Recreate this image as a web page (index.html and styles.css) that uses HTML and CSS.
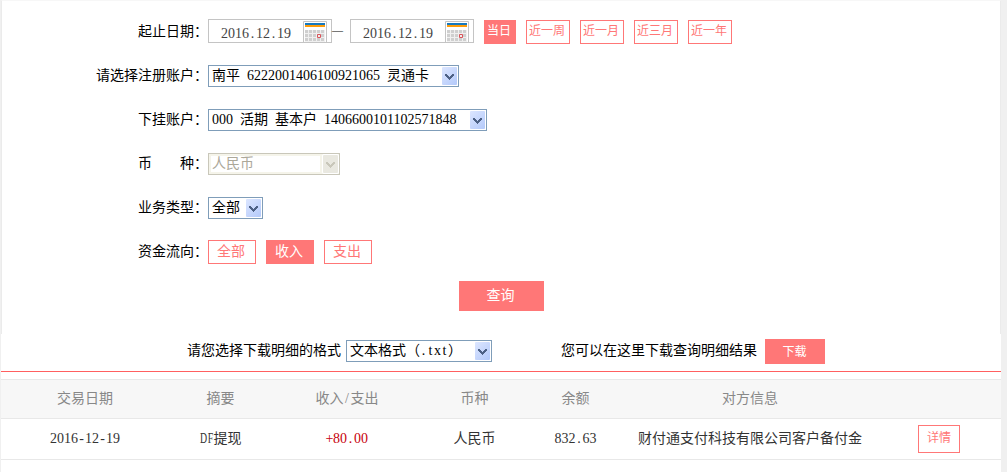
FILE: index.html
```html
<!DOCTYPE html>
<html lang="zh-CN">
<head>
<meta charset="utf-8">
<title>账户明细查询</title>
<link rel="stylesheet" href="styles.css">
</head>
<body>
<svg class="defs" width="0" height="0" aria-hidden="true">
  <defs>
    <pattern id="cells" x="2" y="9" width="4" height="4" patternUnits="userSpaceOnUse"><rect width="4" height="4" fill="#f0f0f0"/><rect width="3" height="3" fill="#cfcfcf"/></pattern>
    <symbol id="calendar" viewBox="0 0 24 21">
      <path d="M1 1h22v20H1z" fill="#fff"/>
      <path d="M.5 21V.5h23V21" fill="none" stroke="#c4c4c4"/>
      <path d="M2 2h20v2H2z" fill="#1579c0"/>
      <path d="M2 4h20v2H2z" fill="#ff9c08"/>
      <path d="M2 9h20v12H2z" fill="url(#cells)"/>
      <path d="M14.5 13.5h3v3h-3z" fill="#eee" stroke="#d9545a"/>
    </symbol>
    <symbol id="arrow" viewBox="0 0 15 18">
      <path d="M3 7h2v1h1v1h1v1h1V9h1V8h1V7h2v2h-1v1h-1v1H9v1H8v1H7v-1H6v-1H5v-1H4V9H3z" fill="currentColor"/>
    </symbol>
  </defs>
</svg>
<main class="page">
  <section class="filters">
    <div class="row">
      <span class="label">起止日期：</span>
      <div class="date"><span>2016<i>.</i>12<i>.</i>19</span><svg class="calendar"><use href="#calendar"/></svg></div>
      <span class="dash">—</span>
      <div class="date"><span>2016<i>.</i>12<i>.</i>19</span><svg class="calendar"><use href="#calendar"/></svg></div>
      <div class="tags small">
        <a class="tag active">当日</a><a class="tag">近一周</a><a class="tag">近一月</a><a class="tag">近三月</a><a class="tag">近一年</a>
      </div>
    </div>
    <div class="row">
      <span class="label">请选择注册账户：</span>
      <div class="select account"><span>南平 6222001406100921065 灵通卡</span><svg class="arrow"><use href="#arrow"/></svg></div>
    </div>
    <div class="row">
      <span class="label">下挂账户：</span>
      <div class="select sub-account"><span>000 活期 基本户 1406600101102571848</span><svg class="arrow"><use href="#arrow"/></svg></div>
    </div>
    <div class="row">
      <span class="label">币　　种：</span>
      <div class="select currency disabled"><span>人民币</span><svg class="arrow"><use href="#arrow"/></svg></div>
    </div>
    <div class="row">
      <span class="label">业务类型：</span>
      <div class="select kind"><span>全部</span><svg class="arrow"><use href="#arrow"/></svg></div>
    </div>
    <div class="row">
      <span class="label">资金流向：</span>
      <div class="tags flow"><a class="tag">全部</a><a class="tag active">收入</a><a class="tag">支出</a></div>
    </div>
    <button class="query">查询</button>
  </section>
  <section class="download">
    <span class="prompt">请您选择下载明细的格式</span>
    <div class="select format"><span>文本格式（<i>.</i><i>t</i><i>x</i><i>t</i>）</span><svg class="arrow"><use href="#arrow"/></svg></div>
    <span class="hint">您可以在这里下载查询明细结果</span>
    <button class="save">下载</button>
  </section>
  <section class="table">
    <div class="line head">
      <span>交易日期</span><span>摘要</span><span>收入<i>/</i>支出</span><span>币种</span><span>余额</span><span>对方信息</span><span></span>
    </div>
    <div class="line">
      <span>2016<i>-</i>12<i>-</i>19</span><span><i class="wide">D</i><i class="wide">F</i>提现</span><span class="income"><i>+</i>80<i>.</i>00</span><span>人民币</span><span>832<i>.</i>63</span><span>财付通支付科技有限公司客户备付金</span><span><a class="detail">详情</a></span>
    </div>
  </section>
</main>
</body>
</html>
```
FILE: styles.css
```css
* { box-sizing: border-box; }
body {
  margin: 0;
  background: #f0f0f0;
  color: #000;
  font: 14px/20px "Liberation Serif", "Noto Sans CJK SC", serif;
}
.defs { display: block; }
.page {
  width: 1000px;
  height: 472px;
  margin-left: 1px;
  background: #fff;
  overflow: hidden;
}
i {
  display: inline-flex;
  justify-content: center;
  width: 7px;
  font-style: normal;
}
i.wide { width: 10px; margin-right: -3px; transform: scaleX(.7); transform-origin: left; }
button {
  display: block;
  padding: 0;
  border: 0;
  background: #ff7777;
  color: #fff;
  font: inherit;
}
.filters {
  height: 334px;
  padding-top: 8px;
  border: 1px solid #ebebeb;
  border-top-color: #f7f7f7;
  border-bottom: 0;
}
.row { display: flex; height: 44px; align-items: flex-start; padding-top: 10px; }
.label { width: 206px; padding-top: 3px; text-align: right; white-space: nowrap; flex: none; }
.date {
  display: flex;
  justify-content: space-between;
  width: 124px;
  height: 24px;
  padding: 1px 4px 0 12px;
  border: 1px solid #c4c4c4;
  color: #444;
}
.date span { padding-top: 3px; }
.calendar { width: 24px; height: 21px; }
.dash { width: 18px; font-size: 11px; font-weight: bold; padding-top: 1px; }
.tags { display: flex; gap: 10px; padding-top: 1px; }
.small { margin-left: 10px; font-size: 12px; }
.tag {
  height: 24px;
  padding: 0 4px 0 2px;
  border: 1px solid #ff7777;
  color: #ff7777;
  line-height: 21px;
}
.flow { padding-top: 1px; }
.flow .tag { padding: 0 10px 0 8px; line-height: 22px; }
.tag.active { background: #ff7777; color: #fff; }
.select {
  display: flex;
  justify-content: space-between;
  height: 22px;
  margin-top: 2px;
  padding: 1px 1px 1px 3px;
  border: 1px solid #7f9db9;
  background: #fff;
  line-height: 18px;
  word-spacing: 3.5px;
  white-space: nowrap;
}
.arrow {
  width: 15px;
  height: 18px;
  border-radius: 1px;
  background: linear-gradient(135deg, #dce6ff, #b3c9fa);
  color: #4d6185;
  flex: none;
}
.account { width: 251px; }
.sub-account { width: 279px; }
.currency { width: 132px; }
.kind { width: 55px; }
.format { width: 146px; margin: 0 0 0 5px; }
.disabled { border-color: #c9c7ba; color: #aca899; box-shadow: inset 0 0 0 2px #f5f4ea; }
.disabled .arrow { background: #e9e8e0; color: #c9c7ba; box-shadow: 0 0 0 1px #fff, -2px 0 0 1px #f5f4ea; }
.query { width: 85px; height: 30px; margin: 8px 0 0 457px; padding: 0 2px 1px 0; }
.download {
  display: flex;
  height: 38px;
  padding: 6px 0 0 186px;
  border-bottom: 1px solid #ff5f5f;
}
.prompt, .hint { padding-top: 1px; }
.hint { margin-left: 69px; }
.save { width: 60px; height: 25px; margin: -1px 0 0 8px; padding: 0 1px 0 0; font-size: 12px; }
.table { margin-top: 7px; }
.line {
  display: grid;
  grid-template-columns: 168px 103px 150px 105px 97px 252px 125px;
  height: 41px;
  align-items: center;
  text-align: center;
  color: #333;
  border-bottom: 1px solid #e8e8e8;
}
.head { height: 40px; background: #f7f7f7; border-top: 1px solid #e8e8e8; color: #888; }
.line .income { color: #c7000b; }
.detail {
  display: block;
  width: 42px;
  height: 28px;
  margin: 0 auto 0 42px;
  border: 1px solid #ff7777;
  color: #ff7777;
  font-size: 12px;
  line-height: 25px;
}
```
